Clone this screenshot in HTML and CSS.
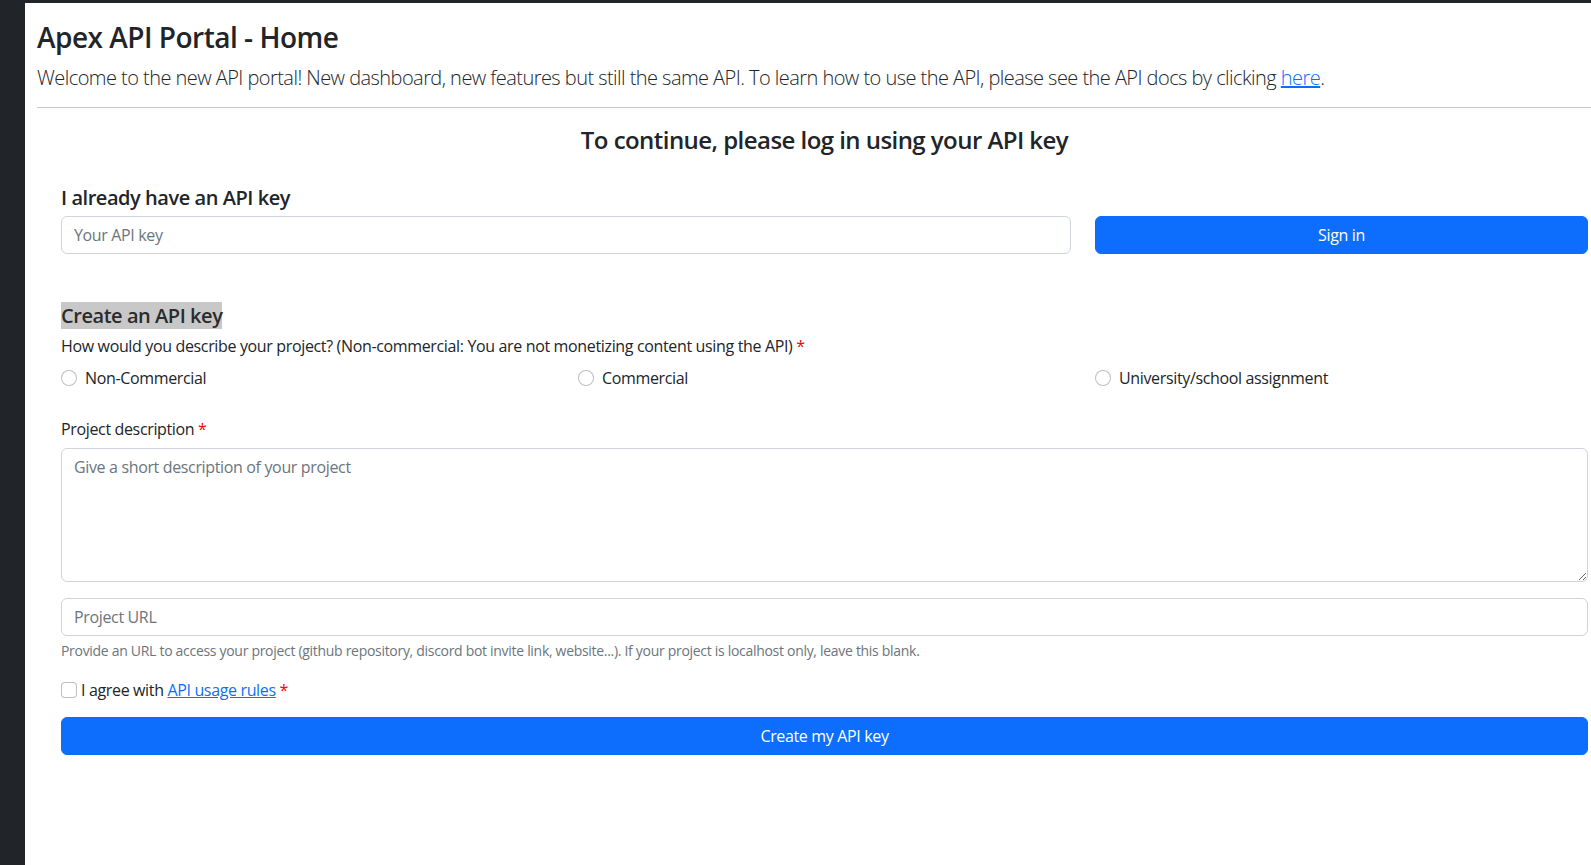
FILE: index.html
```html
<!DOCTYPE html>
<html lang="en">
<head>
<meta charset="utf-8">
<title>Apex API Portal - Home</title>
<link rel="stylesheet" href="styles.css">
</head>
<body>
<div class="topbar"></div>
<div class="layout">
  <aside class="sidebar"></aside>
  <main class="main">
    <header class="header">
      <h1 class="title">Apex API Portal - Home</h1>
      <p class="lead">Welcome to the new API portal! New dashboard, new features but still the same API. To learn how to use the API, please see the API docs by clicking <a href="#">here</a>.</p>
    </header>
    <hr class="divider">
    <section class="auth">
      <h2 class="auth-title">To continue, please log in using your API key</h2>
      <h3 class="section-title">I already have an API key</h3>
      <form class="login-row">
        <input class="field" type="text" placeholder="Your API key">
        <button class="btn" type="button">Sign in</button>
      </form>
      <h3 class="section-title create"><span class="mark">Create an API key</span></h3>
      <p class="question">How would you describe your project? (Non-commercial: You are not monetizing content using the API) <span class="req">*</span></p>
      <div class="radios">
        <label class="radio"><input type="radio" name="type"><span>Non-Commercial</span></label>
        <label class="radio"><input type="radio" name="type"><span>Commercial</span></label>
        <label class="radio"><input type="radio" name="type"><span>University/school assignment</span></label>
      </div>
      <label class="field-label">Project description <span class="req">*</span></label>
      <textarea class="field textarea" placeholder="Give a short description of your project"></textarea>
      <input class="field url" type="text" placeholder="Project URL">
      <p class="help">Provide an URL to access your project (github repository, discord bot invite link, website...). If your project is localhost only, leave this blank.</p>
      <label class="agree"><input type="checkbox"><span>I agree with <a href="#">API usage rules</a> <span class="req">*</span></span></label>
      <button class="btn btn-block" type="button">Create my API key</button>
    </section>
  </main>
</div>
</body>
</html>
```
FILE: styles.css
```css
* { box-sizing: border-box; }
html, body { margin: 0; padding: 0; }
body {
  font-family: "Open Sans", "Noto Sans", sans-serif;
  font-size: 16px;
  line-height: 1.5;
  letter-spacing: -0.35px;
  color: #212529;
  background: #fff;
  overflow: hidden;
}
a { color: #0d6efd; text-decoration: underline; }
.topbar { height: 3px; background: #212529; }
.layout { display: flex; min-height: 862px; }
.sidebar { width: 25px; flex: 0 0 25px; background: #212529; }
.main { flex: 1; padding-left: 12px; }
.header { padding-top: 18px; }
.title {
  margin: 0 0 8px;
  font-size: 28px;
  line-height: 1.2;
  font-weight: 600;
  letter-spacing: -0.5px;
}
.lead {
  margin: 0;
  font-size: 20px;
  font-weight: 300;
  line-height: 1.5;
  letter-spacing: -0.55px;
}
.divider {
  margin: 14px 0 0;
  border: 0;
  border-top: 1px solid #c8c9ca;
}
.auth { padding: 0 3px 0 24px; }
.auth-title {
  margin: 18px 0 30px;
  font-size: 24px;
  line-height: 28px;
  font-weight: 600;
  letter-spacing: -0.55px;
  text-align: center;
}
.section-title {
  margin: 0 0 6px;
  font-size: 20px;
  line-height: 24px;
  font-weight: 600;
  letter-spacing: -0.45px;
  padding-top: 2px;
}
.section-title.create { margin-top: 48px; }
.mark { background: #c8c8c8; color: #2b2b2b; }
.login-row {
  display: grid;
  grid-template-columns: 1010fr 493fr;
  column-gap: 24px;
  margin: 0;
}
.field {
  display: block;
  width: 100%;
  height: 38px;
  padding: 6px 12px;
  font: inherit;
  font-size: 16px;
  line-height: 24px;
  letter-spacing: inherit;
  color: #212529;
  background: #fff;
  border: 1px solid #ced4da;
  border-radius: 6px;
  outline: none;
}
.field::placeholder { color: #6c757d; opacity: 1; }
.btn {
  height: 38px;
  padding: 6px 12px;
  font: inherit;
  font-size: 16px;
  line-height: 24px;
  letter-spacing: inherit;
  color: #fff;
  background: #0d6efd;
  border: 1px solid #0d6efd;
  border-radius: 6px;
  cursor: pointer;
}
.question { margin: 0 0 8px; }
.req { color: #f00; }
.radios {
  display: grid;
  grid-template-columns: repeat(3, 1fr);
  column-gap: 24px;
  margin-bottom: 27px;
}
.radio { display: flex; align-items: center; gap: 8px; }
.radio input, .agree input {
  appearance: none;
  -webkit-appearance: none;
  width: 16px;
  height: 16px;
  margin: 0;
  flex: 0 0 16px;
  background: #fff;
  border: 1px solid rgba(0,0,0,.25);
}
.radio input { border-radius: 50%; }
.agree input { border-radius: 4px; }
.field-label { display: block; margin-bottom: 7px; }
.textarea { height: 134px; resize: vertical; }
.url { margin-top: 16px; }
.help { margin: 4px 0 16px; font-size: 14px; line-height: 21px; color: #6c757d; letter-spacing: -0.3px; }
.agree { display: flex; align-items: center; gap: 4px; padding-top: 1px; }
.btn-block { display: block; width: 100%; margin-top: 15px; }
```
